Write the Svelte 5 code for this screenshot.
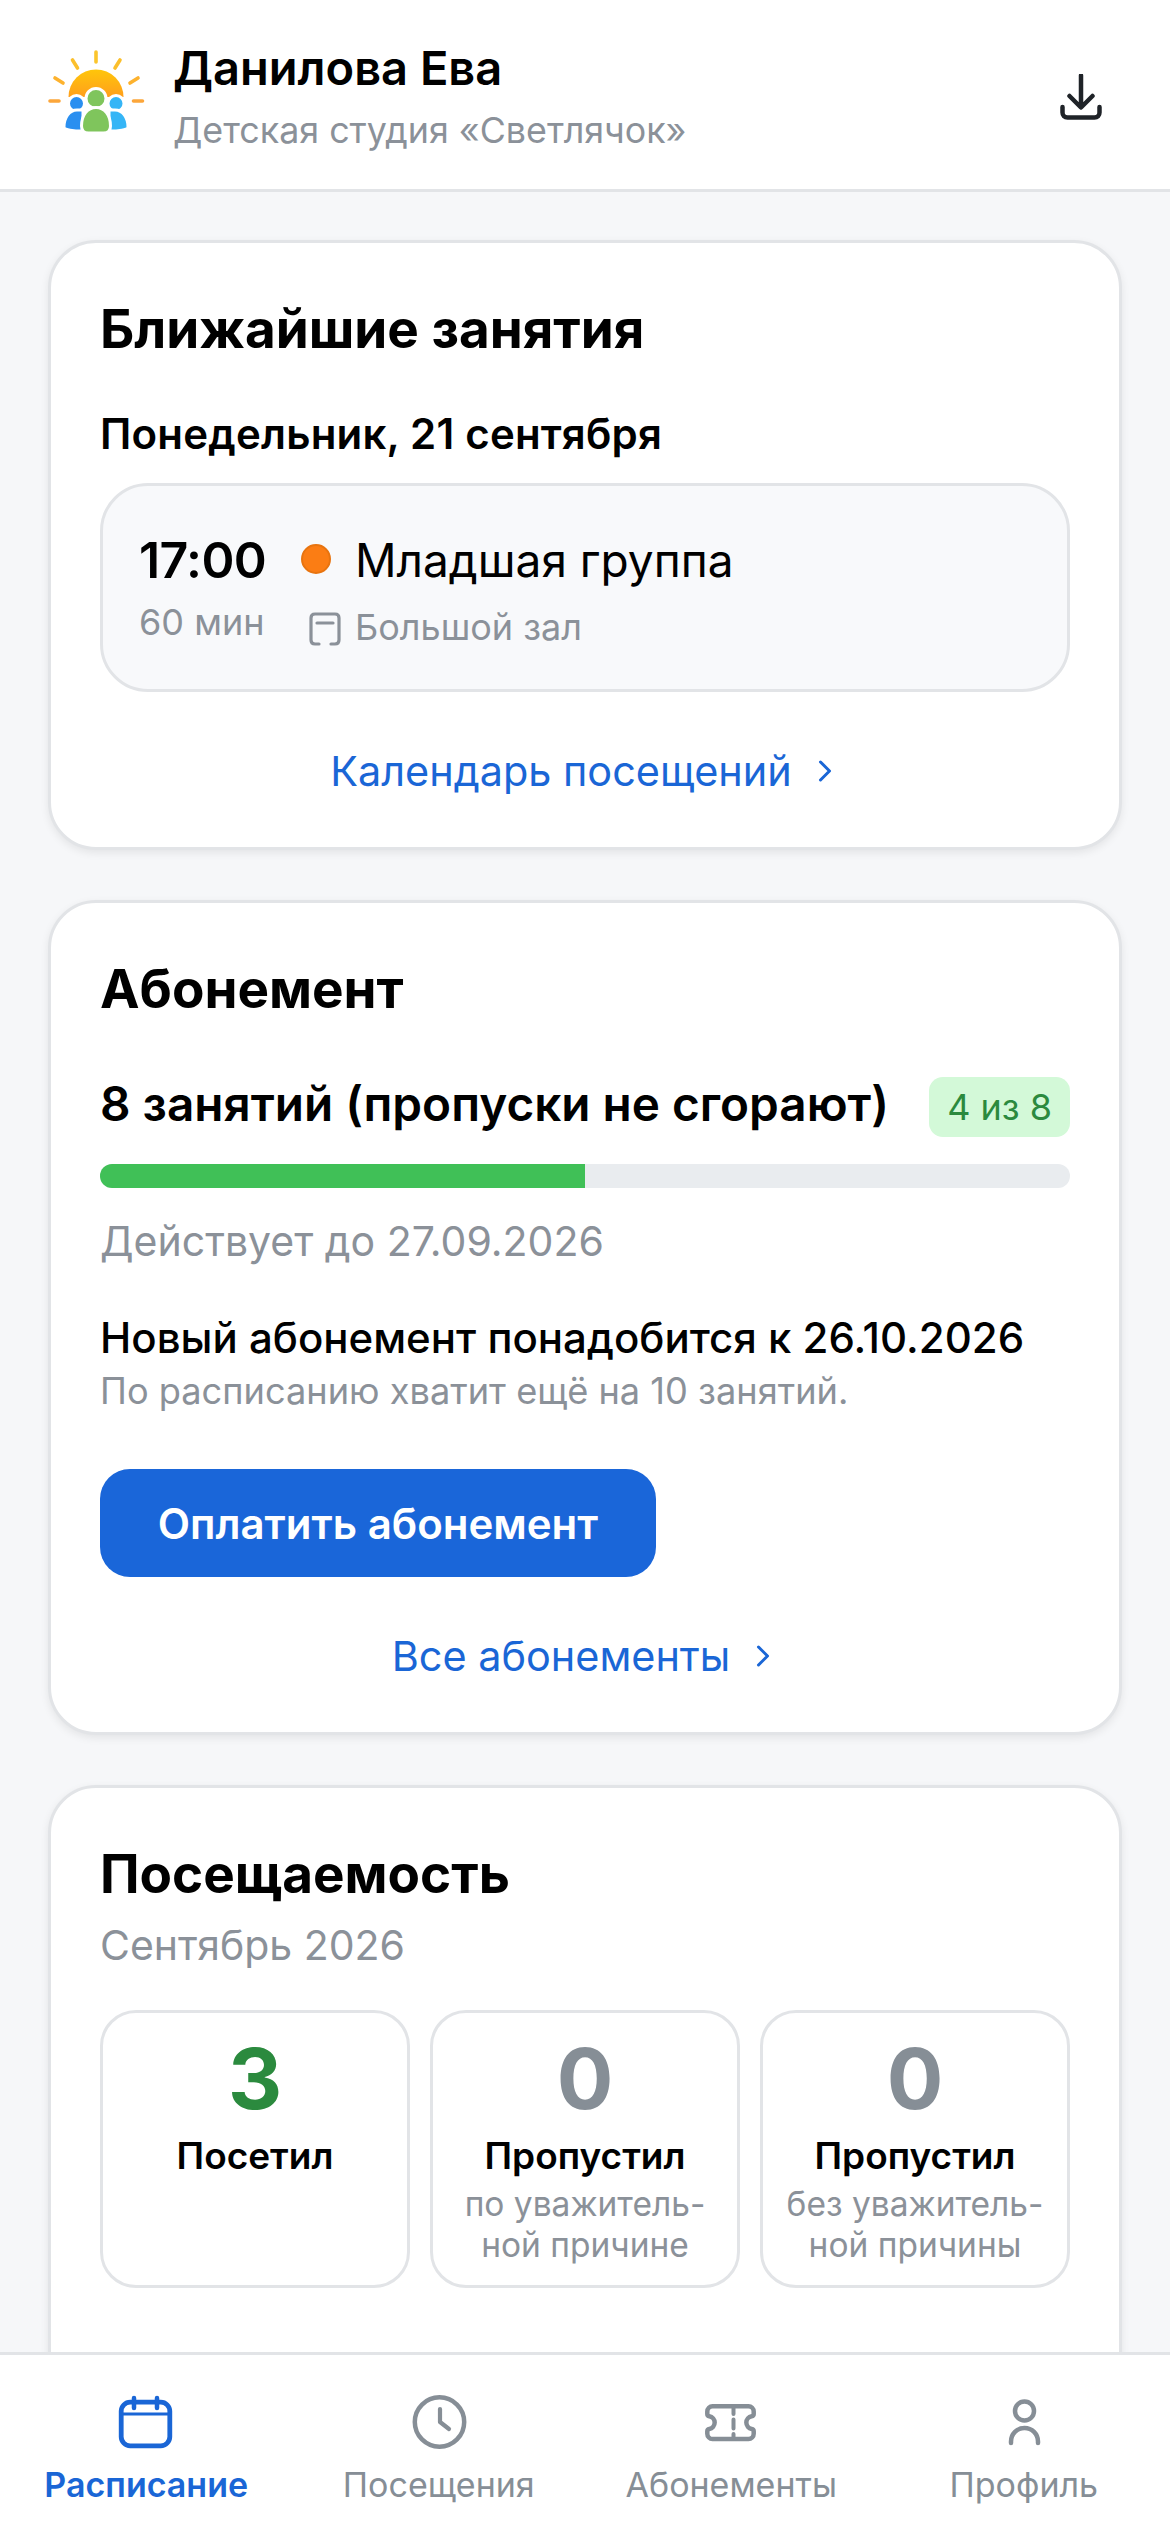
<script lang="ts">
	const stats = [
		{ value: 3, tone: 'good', label: 'Посетил', note: [] },
		{ value: 0, tone: 'none', label: 'Пропустил', note: ['по уважитель-', 'ной причине'] },
		{ value: 0, tone: 'none', label: 'Пропустил', note: ['без уважитель-', 'ной причины'] }
	];

	const tabs = ['Расписание', 'Посещения', 'Абонементы', 'Профиль'];
	let used = 4;
	let total = 8;
</script>

<div class="screen">
	<header class="top">
		<svg class="logo" viewBox="0 0 100 100" width="100" height="100" aria-hidden="true">
			<defs>
				<linearGradient id="sun" x1="0" y1="0" x2="0" y2="1">
					<stop offset="0" stop-color="#ffc60a" />
					<stop offset="1" stop-color="#ff9f1c" />
				</linearGradient>
			</defs>
			<g stroke-width="3.6" stroke-linecap="round" fill="none">
				<path d="M50 6v10" stroke="#fbc52c" />
				<path d="M26.5 14l5 8M74 14l-5 8" stroke="#fbbf2c" />
				<path d="M9 32l8 5M92 32l-8 5" stroke="#fdb22e" />
				<path d="M4 55h9M87.5 55h9" stroke="#fca63a" />
			</g>
			<path d="M22.5 51a27.5 27.5 0 0 1 55 0z" fill="url(#sun)" />
			<g stroke="#fff" stroke-width="3">
				<circle cx="30.5" cy="57.5" r="8" fill="#2a8ff0" />
				<circle cx="70" cy="57.5" r="8" fill="#35b5f6" />
				<path d="M18 81c0-9 5-17 13-17h6v21c-9 0-19-1-19-4z" fill="#2a8ff0" />
				<path d="M82 81c0-9-5-17-13-17h-6v21c9 0 19-1 19-4z" fill="#35b5f6" />
				<circle cx="50" cy="52.5" r="10" fill="#7fc55c" />
				<path d="M35.5 80c0-11 6-18.500 14.500-18.500S64.500 69 64.500 80c0 5-3 7-7 7h-15c-4 0-7-2-7-7z" fill="#7fc55c" />
			</g>
		</svg>
		<div class="who">
			<div class="name">Данилова Ева</div>
			<div class="studio">Детская студия «Светлячок»</div>
		</div>
		<svg class="download" viewBox="0 0 42 46" width="42" height="46" aria-hidden="true">
			<path d="M21 1.5v31M9.5 22L21 33.5 32.5 22M2.5 33v5.500c0 3 2 5 5 5h27c3 0 5-2 5-5V33" fill="none" stroke="#1f2328" stroke-width="4.5" stroke-linecap="round" stroke-linejoin="round" />
		</svg>
	</header>

	<main class="feed">
		<section class="card">
			<h2>Ближайшие занятия</h2>
			<div class="day">Понедельник, 21 сентября</div>
			<div class="slot">
				<div class="times">
					<div class="time">17:00</div>
					<div class="len">60 мин</div>
				</div>
				<div class="marks">
					<span class="dot"></span>
					<svg class="room" viewBox="0 0 32 34" width="32" height="34" aria-hidden="true">
						<path d="M10 32H6c-2.5 0-4-1.500-4-4V6c0-2.500 1.500-4 4-4h20c2.500 0 4 1.500 4 4v22c0 2.500-1.500 4-4 4h-4M8 11h16" fill="none" stroke="#8b9199" stroke-width="3.2" stroke-linecap="round" />
					</svg>
				</div>
				<div class="info">
					<div class="group">Младшая группа</div>
					<div class="place">Большой зал</div>
				</div>
			</div>
			<div class="link first">
				Календарь посещений
				<svg viewBox="0 0 14 24" width="14" height="24" aria-hidden="true"><path d="M2.5 3l9 9-9 9" fill="none" stroke="currentColor" stroke-width="3" stroke-linecap="round" stroke-linejoin="round" /></svg>
			</div>
		</section>

		<section class="card">
			<h2>Абонемент</h2>
			<div class="plan">
				<span class="plan-name">8 занятий (пропуски не сгорают)</span>
				<span class="badge">{used} из {total}</span>
			</div>
			<div class="track"><div class="fill" style="width: {(used / total) * 100}%"></div></div>
			<div class="valid">Действует до 27.09.2026</div>
			<div class="renew">Новый абонемент понадобится к 26.10.2026</div>
			<div class="hint">По расписанию хватит ещё на 10 занятий.</div>
			<button class="pay">Оплатить абонемент</button>
			<div class="link second">
				Все абонементы
				<svg viewBox="0 0 14 24" width="14" height="24" aria-hidden="true"><path d="M2.5 3l9 9-9 9" fill="none" stroke="currentColor" stroke-width="3" stroke-linecap="round" stroke-linejoin="round" /></svg>
			</div>
		</section>

		<section class="card">
			<h2>Посещаемость</h2>
			<div class="month">Сентябрь 2026</div>
			<div class="stats">
				{#each stats as s}
					<div class="stat">
						<div class="num {s.tone}">{s.value}</div>
						<div class="lbl">{s.label}</div>
						{#each s.note as line}
							<div class="note">{line}</div>
						{/each}
					</div>
				{/each}
			</div>
		</section>
	</main>

	<nav class="tabs">
		{#each tabs as tab, i}
			<div class="tab" class:on={i === 0}>
				<div class="ico">
					{#if i === 0}
						<svg viewBox="0 0 56 56" width="56" height="56" aria-hidden="true">
							<rect x="3.2" y="9.2" width="48.6" height="43.6" rx="9" fill="none" stroke="currentColor" stroke-width="4.8" />
							<path d="M3.5 21h48" stroke="currentColor" stroke-width="3" />
							<path d="M16 5v10M39 5v10" stroke="currentColor" stroke-width="4.5" stroke-linecap="round" />
						</svg>
					{:else if i === 1}
						<svg viewBox="0 0 56 56" width="56" height="56" aria-hidden="true">
							<circle cx="28.5" cy="29" r="24.7" fill="none" stroke="currentColor" stroke-width="4.5" />
							<path d="M29 16v13l9 7" fill="none" stroke="currentColor" stroke-width="4.2" stroke-linecap="round" stroke-linejoin="round" />
						</svg>
					{:else if i === 2}
						<svg viewBox="0 0 56 56" width="56" height="56" aria-hidden="true">
							<path d="M9.5 13.2h36a5.2 5.2 0 0 1 5.2 5.2v2.500c0 1.300-.8 2.100-2 2.300a6.5 6.5 0 0 0 0 12.800c1.200.2 2 1 2 2.300v2.500a5.2 5.2 0 0 1-5.2 5.2h-36a5.2 5.2 0 0 1-5.2-5.2v-2.500c0-1.300.8-2.100 2-2.300a6.5 6.5 0 0 0 0-12.800c-1.200-.2-2-1-2-2.300v-2.500a5.2 5.2 0 0 1 5.2-5.2z" fill="none" stroke="currentColor" stroke-width="4.5" stroke-linejoin="round" />
							<path d="M30.5 14v7M30.5 26.500v9M30.5 41v4" stroke="currentColor" stroke-width="4" stroke-linecap="round" />
						</svg>
					{:else}
						<svg viewBox="0 0 56 56" width="56" height="56" aria-hidden="true">
							<circle cx="28.5" cy="18" r="9.5" fill="none" stroke="currentColor" stroke-width="4.5" />
							<path d="M15 50v-1.500a13.5 13.5 0 0 1 27 0V50" fill="none" stroke="currentColor" stroke-width="4.5" stroke-linecap="round" />
						</svg>
					{/if}
				</div>
				<div class="tab-name">{tab}</div>
			</div>
		{/each}
	</nav>
</div>

<style>
	:global(body) {
		margin: 0;
		background: #f6f7f9;
	}

	.screen {
		display: flex;
		flex-direction: column;
		height: 2532px;
		overflow: hidden;
		font-family: Inter, "Noto Sans", sans-serif;
		color: #000;
		background: #f6f7f9;
	}

	/* ── Header ── */
	.top {
		display: flex;
		align-items: center;
		flex-shrink: 0;
		box-sizing: border-box;
		height: 192px;
		padding: 0 68px 0 46px;
		background: #fff;
		border-bottom: 3px solid #e2e4e7;
	}

	.logo {
		flex-shrink: 0;
		margin-right: 27px;
		margin-top: 2px;
	}

	.who {
		flex: 1;
		margin-top: 2px;
	}

	.name {
		font-size: 47px;
		line-height: 56px;
		font-weight: 600;
	}

	.studio {
		margin-top: 12px;
		font-size: 35.8px;
		line-height: 44px;
		color: #8b9199;
	}

	.download {
		margin-top: 4px;
	}

	/* ── Cards ── */
	.feed {
		flex: 1;
		min-height: 0;
		overflow: hidden;
		display: flex;
		flex-direction: column;
		gap: 50px;
		padding: 48px 48px 0;
	}

	.card {
		flex-shrink: 0;
		padding: 54px 49px 50px;
		background: #fff;
		border: 3px solid #e2e4e7;
		border-radius: 48px;
		box-shadow: 0 3px 8px rgba(0, 0, 0, 0.08);
	}

	.card:last-child {
		padding-bottom: 140px;
	}

	h2 {
		margin: 0;
		font-size: 53px;
		line-height: 64px;
		font-weight: 700;
	}

	.day {
		margin-top: 48px;
		font-size: 42px;
		line-height: 50px;
		font-weight: 600;
		letter-spacing: 0.2px;
	}

	.slot {
		display: flex;
		box-sizing: border-box;
		height: 209px;
		margin-top: 24px;
		padding: 46px 36px 0;
		background: #f8f9fb;
		border: 3px solid #e2e4e7;
		border-radius: 48px;
	}

	.times {
		width: 130px;
	}

	.time {
		font-size: 50px;
		line-height: 56px;
		font-weight: 600;
		letter-spacing: -0.6px;
	}

	.len {
		margin-top: 12px;
		font-size: 36px;
		line-height: 44px;
		color: #8b9199;
	}

	.marks {
		display: flex;
		flex-direction: column;
		align-items: flex-start;
		width: 34px;
		margin-left: 32px;
	}

	.dot {
		width: 30px;
		height: 30px;
		margin-top: 12px;
		background: #fb7d14;
		border: 2px solid #e8740f;
		border-radius: 50%;
		box-sizing: border-box;
	}

	.room {
		margin-top: 38px;
		margin-left: 8px;
		flex-shrink: 0;
	}

	.info {
		margin-left: 20px;
	}

	.group {
		font-size: 46px;
		line-height: 56px;
	}

	.place {
		margin-top: 17px;
		font-size: 36px;
		line-height: 44px;
		color: #8b9199;
	}

	.link {
		display: flex;
		justify-content: center;
		align-items: center;
		gap: 26px;
		padding-right: 8px;
		font-size: 41.4px;
		line-height: 52px;
		color: #1a66d6;
	}

	.first {
		margin-top: 53px;
	}

	.second {
		margin-top: 53px;
	}

	.plan {
		display: flex;
		justify-content: space-between;
		align-items: center;
		height: 60px;
		margin-top: 56px;
		font-size: 47.7px;
		font-weight: 600;
	}

	.plan-name {
		margin-bottom: 6px;
	}

	.badge {
		box-sizing: border-box;
		height: 60px;
		padding: 0 18px;
		line-height: 60px;
		font-size: 36px;
		font-weight: 400;
		color: #2b8a3e;
		background: #d3f9d8;
		border-radius: 14px;
	}

	.track {
		height: 24px;
		margin-top: 27px;
		overflow: hidden;
		background: #e9ecef;
		border-radius: 12px;
	}

	.fill {
		height: 100%;
		background: #40c057;
	}

	.valid {
		margin-top: 28px;
		font-size: 41px;
		line-height: 50px;
		color: #8b9199;
	}

	.renew {
		margin-top: 46px;
		font-size: 42px;
		line-height: 52px;
		font-weight: 500;
	}

	.hint {
		margin-top: 5px;
		font-size: 36.2px;
		line-height: 44px;
		color: #8b9199;
	}

	.pay {
		display: block;
		width: 556px;
		height: 108px;
		margin-top: 56px;
		padding: 0;
		font: inherit;
		font-size: 42px;
		font-weight: 600;
		color: #fff;
		background: #1a66d9;
		border: none;
		border-radius: 30px;
	}

	.month {
		margin-top: 14px;
		font-size: 41px;
		line-height: 50px;
		color: #8b9199;
	}

	.stats {
		display: grid;
		grid-template-columns: repeat(3, 1fr);
		gap: 20px;
		margin-top: 40px;
	}

	.stat {
		box-sizing: border-box;
		height: 278px;
		padding-top: 22px;
		text-align: center;
		background: #fff;
		border: 3px solid #e2e4e7;
		border-radius: 36px;
	}

	.num {
		font-size: 84px;
		line-height: 88px;
		font-weight: 700;
	}

	.num.good {
		color: #2b8a3e;
	}

	.num.none {
		color: #868e96;
	}

	.lbl {
		margin-top: 11px;
		font-size: 37px;
		line-height: 44px;
		font-weight: 600;
	}

	.note {
		font-size: 33.5px;
		line-height: 41px;
		color: #8b9199;
	}

	.lbl + .note {
		margin-top: 6px;
	}

	/* ── Tab bar ── */
	.tabs {
		display: grid;
		grid-template-columns: repeat(4, 1fr);
		flex-shrink: 0;
		box-sizing: border-box;
		height: 180px;
		background: #fff;
		border-top: 3px solid #e2e4e7;
	}

	.tab {
		display: flex;
		flex-direction: column;
		align-items: center;
		padding-top: 38px;
		color: #868e96;
	}

	.tab.on {
		color: #1a66d6;
	}

	.ico {
		height: 56px;
	}

	.tab-name {
		margin-top: 14px;
		font-size: 34px;
		line-height: 44px;
	}

	.tab.on .tab-name {
		font-weight: 600;
	}
</style>
